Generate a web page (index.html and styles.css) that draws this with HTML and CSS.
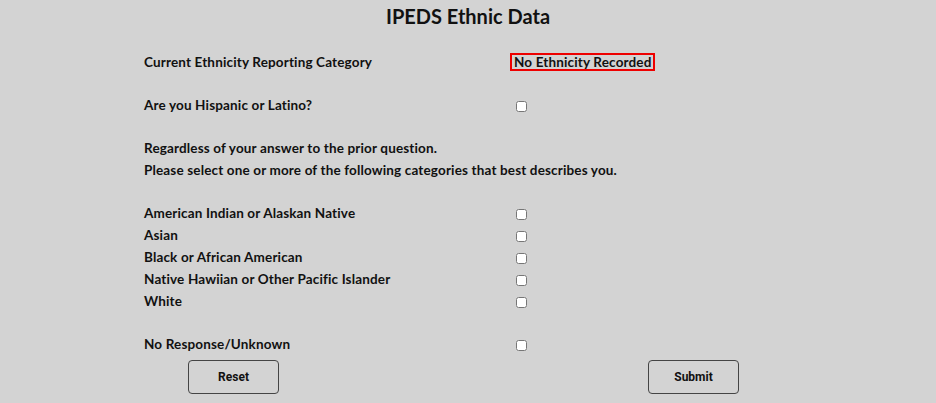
FILE: index.html
```html
<html>
<head>
	<title>IPEDS Ethnic Data</title>
	<meta http-equiv="Content-Type" content="text/html; charset=utf-8" />
	<link rel="stylesheet" href="styles.css">
</head>
<body>
	<div class='page'>
		<div class='title'>IPEDS Ethnic Data</div>
		<form class='ethnic_form'>
			<div class='row'>
				<div class='label'>Current Ethnicity Reporting Category</div>
				<div class='field'><span class='current_value'>No Ethnicity Recorded</span></div>
			</div>
			<div class='spacer'></div>
			<div class='row'>
				<div class='label'>Are you Hispanic or Latino?</div>
				<div class='field'><input type='checkbox' name='hispanic' /></div>
			</div>
			<div class='spacer'></div>
			<div class='row'>
				<div class='label wide'>Regardless of your answer to the prior question.</div>
			</div>
			<div class='row'>
				<div class='label wide'>Please select one or more of the following categories that best describes you.</div>
			</div>
			<div class='spacer'></div>
			<div class='row'>
				<div class='label'>American Indian or Alaskan Native</div>
				<div class='field'><input type='checkbox' name='race_ai' /></div>
			</div>
			<div class='row'>
				<div class='label'>Asian</div>
				<div class='field'><input type='checkbox' name='race_as' /></div>
			</div>
			<div class='row'>
				<div class='label'>Black or African American</div>
				<div class='field'><input type='checkbox' name='race_bl' /></div>
			</div>
			<div class='row'>
				<div class='label'>Native Hawiian or Other Pacific Islander</div>
				<div class='field'><input type='checkbox' name='race_pi' /></div>
			</div>
			<div class='row'>
				<div class='label'>White</div>
				<div class='field'><input type='checkbox' name='race_wh' /></div>
			</div>
			<div class='spacer'></div>
			<div class='row'>
				<div class='label'>No Response/Unknown</div>
				<div class='field'><input type='checkbox' name='race_un' /></div>
			</div>
			<div class='buttons'>
				<input type='reset' class='button' value='Reset' />
				<input type='submit' class='button' value='Submit' />
			</div>
		</form>
	</div>
</body>
</html>
```

FILE: styles.css
```css
body { margin: 0; background-color: #d3d3d3; color: #111; font-family: Lato, sans-serif; }
.page { width: 936px; }
.title { text-align: center; font-size: 20px; font-weight: bold; padding-top: 4px; height: 30px; }
.ethnic_form { padding: 17px 0 0 144px; }
.row { display: flex; align-items: center; height: 22px; font-size: 13.5px; font-weight: bold; letter-spacing: 0.15px; }
.spacer { height: 21px; }
.label { width: 366px; }
.label.wide { width: auto; white-space: nowrap; }
.field { display: flex; align-items: center; }
.field input { margin: 2px 0 0 6px; width: 11px; height: 11px; }
.current_value { border: 2px solid #e00; padding: 0 1px 0 2px; line-height: 14px; }
.buttons { display: flex; gap: 369px; padding: 5px 0 0 44px; }
.button { width: 91px; height: 34px; background-color: #d3d3d3; border: 1px solid #444; border-radius: 4px; font-family: Roboto, sans-serif; font-weight: bold; font-size: 12px; color: #111; }
```
